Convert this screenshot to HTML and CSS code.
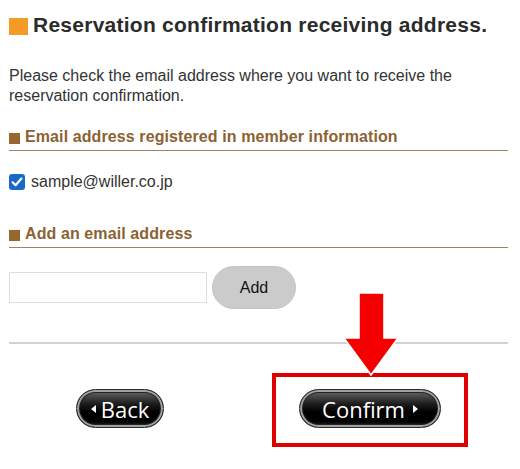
FILE: index.html
```html
<!DOCTYPE html>
<html lang="en">
<head>
<meta charset="utf-8">
<title>Reservation confirmation receiving address</title>
<link rel="stylesheet" href="styles.css">
</head>
<body>
<div class="page">
  <h1 class="title"><span class="title-mark"></span>Reservation confirmation receiving address.</h1>
  <p class="lead">Please check the email address where you want to receive the reservation confirmation.</p>

  <h2 class="section"><span class="section-mark"></span>Email address registered in member information</h2>
  <label class="check-row">
    <span class="check-box"><svg viewBox="0 0 16 16" width="16" height="16"><rect x="0" y="0" width="16" height="16" rx="3" fill="#1a68c9"/><path d="M3.6 8.3 L6.6 11.2 L12.4 4.6" fill="none" stroke="#fff" stroke-width="2.2" stroke-linecap="round" stroke-linejoin="round"/></svg></span>
    <span class="check-text">sample@willer.co.jp</span>
  </label>

  <h2 class="section section-add"><span class="section-mark"></span>Add an email address</h2>
  <div class="add-row">
    <input class="add-input" type="text">
    <button class="add-btn" type="button">Add</button>
  </div>

  <div class="divider"></div>

  <div class="actions">
    <button class="pill pill-back" type="button"><span class="tri tri-left"></span>Back</button>
    <div class="highlight">
      <svg class="pointer" viewBox="0 0 56 84" width="56" height="84"><polygon points="16,1 41,1 41,46 55,46 28,83 1,46 16,46" fill="#f40000" stroke="#fff" stroke-width="1.6" stroke-linejoin="miter"/></svg>
      <button class="pill pill-confirm" type="button">Confirm<span class="tri tri-right"></span></button>
    </div>
  </div>
</div>
</body>
</html>
```

FILE: styles.css
```css
* { box-sizing: border-box; }
html, body { margin: 0; padding: 0; background: #fff; }
body {
  font-family: "Liberation Sans", Arial, sans-serif;
  color: #333;
  width: 520px;
  height: 469px;
  overflow: hidden;
}
.page {
  padding: 13px 12px 0 9px;
}
.title {
  display: flex;
  align-items: center;
  margin: 0;
  font-size: 21px;
  letter-spacing: 0.25px;
  line-height: 24px;
  font-weight: bold;
  color: #2b2b2b;
}
.title-mark {
  display: inline-block;
  width: 19px;
  height: 17px;
  background: #f39b26;
  margin-right: 5px;
  margin-top: 2px;
}
.lead {
  margin: 29px 0 0;
  font-size: 16px;
  line-height: 20px;
  color: #333;
}
.section {
  display: flex;
  align-items: center;
  margin: 21px 0 0;
  padding-bottom: 3px;
  border-bottom: 1px solid #9c8566;
  font-size: 16px;
  letter-spacing: 0.1px;
  line-height: 20px;
  font-weight: bold;
  color: #8c6232;
}
.section-add { margin-top: 32px; }
.section-mark {
  display: inline-block;
  width: 11px;
  height: 11px;
  background: #96672f;
  margin: 2px 5px 0 0;
}
.check-row {
  display: flex;
  align-items: center;
  margin-top: 21px;
  height: 20px;
  font-size: 16px;
  line-height: 20px;
  color: #333;
}
.check-box {
  display: inline-flex;
  width: 16px;
  height: 16px;
  margin-right: 6px;
}
.add-row {
  display: flex;
  align-items: center;
  gap: 5px;
  margin-top: 18px;
}
.add-input {
  width: 198px;
  height: 31px;
  border: 1px solid #dedede;
  margin: 0;
  padding: 0 4px;
  background: #fff;
}
.add-btn {
  width: 84px;
  height: 43px;
  border: 1px solid #c4c4c4;
  border-radius: 22px;
  background: #cbcbcb;
  font-family: "Liberation Sans", Arial, sans-serif;
  font-size: 16px;
  color: #111;
  padding: 0;
}
.divider {
  margin-top: 33px;
  height: 2px;
  background: #d2d2d2;
}
.actions {
  display: flex;
  align-items: flex-start;
  margin-top: 29px;
  padding-left: 67px;
}
.pill {
  display: inline-flex;
  align-items: center;
  justify-content: center;
  height: 39px;
  border: 1px solid #2a2a2a;
  border-radius: 20px;
  box-shadow: inset 0 0 0 2px #a0a0a0, inset 0 0 0 3px #222;
  background: linear-gradient(#6a6a6a 0%, #1c1c1c 38%, #000 60%, #000 85%, #2a2a2a 100%);
  color: #fff;
  font-family: "Open Sans", "DejaVu Sans", sans-serif;
  font-weight: 500;
  font-size: 22px;
  padding: 0;
  margin: 0;
}
.pill-back {
  width: 88px;
  margin-top: 16px;
}
.pill-confirm {
  width: 142px;
}
.tri {
  display: inline-block;
  width: 0;
  height: 0;
  border-top: 4px solid transparent;
  border-bottom: 4px solid transparent;
}
.tri-left {
  border-right: 5px solid #fff;
  margin-right: 5px;
}
.tri-right {
  border-left: 5px solid #fff;
  margin-left: 8px;
}
.highlight {
  position: relative;
  margin-left: 108px;
  border: 4px solid #e00000;
  padding: 12px 23px 15px;
}
.pointer {
  position: absolute;
  left: 67px;
  top: -85px;
}
```
